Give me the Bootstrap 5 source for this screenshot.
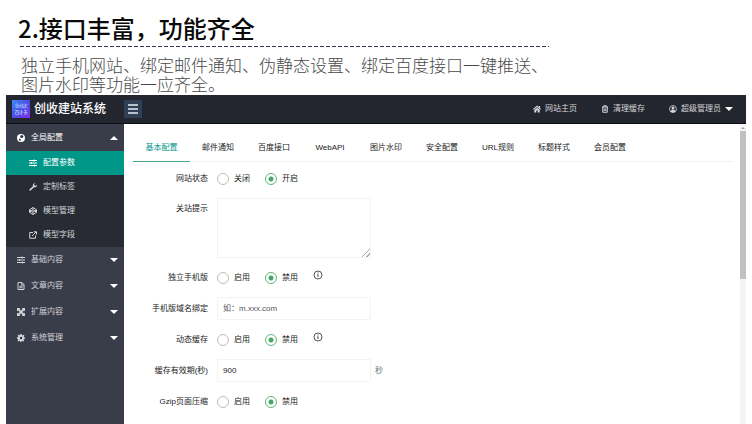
<!DOCTYPE html>
<html lang="zh-CN">
<head>
<meta charset="utf-8">
<meta name="viewport" content="width=device-width, initial-scale=1">
<title>创收建站系统</title>
<link href="https://cdn.jsdelivr.net/npm/bootstrap@5.3.0/dist/css/bootstrap.min.css" rel="stylesheet">
<style>
body{font-family:"Liberation Sans","Noto Sans CJK SC",sans-serif;font-size:8px;line-height:12px;color:#222;background:#fff}
.intro{padding:12px 20px 2px 18px}
.intro h1{font:500 24px/32px "Noto Sans CJK SC",sans-serif;color:#0a0a0a;margin:0}
.dashes{height:1px;margin:2px 0 8px 2px;width:calc(100% - 185px);background:repeating-linear-gradient(90deg,#34345c 0 4px,transparent 4px 6px)}
.intro p{font:300 17px/19px "Noto Sans CJK SC",sans-serif;color:#4a4a4a;margin:0 0 0 3px}
.panel{margin:0 6px}
.topbar{background:#23262e;height:29px;border-bottom:1px solid #0c0e16;padding:0 13px 0 6px}
.topbar a{color:#d4d5d8;text-decoration:none}
.brand{width:112px;font-size:12px;line-height:18px;font-weight:500}
.topbar .brand{color:#fff}
.toggle{width:18px;height:18px;background:#2f4056;border:0;padding:0}
.side{width:118px;background:#393d49;flex:none}
.side a{color:#d3d4d8;text-decoration:none;display:flex;align-items:center;height:26px;padding:0 6px 0 11px}
.side a span{flex:1;margin-left:6px}
.side .open-row{height:27px;color:#fff}
.submenu{background:#282b33}
.submenu a{height:24px;padding-left:23px}
.side .submenu a.current{background:#009688;color:#fff}
.ico{width:8px;height:8px;flex:none;fill:currentColor;display:block}
.line-ico{fill:none;stroke:currentColor;stroke-width:2}
.caret{width:0;height:0;border:4px solid transparent;border-top-color:#fff;border-bottom:0;flex:none}
.caret.up{border:4px solid transparent;border-bottom-color:#fff;border-top:0}
.main{padding:11px 6px 0 9px;min-width:0}
.tabs{border-bottom:1px solid #f2f2f2;height:27px;margin-bottom:5px}
.tabs button{width:56px;height:27px;border:0;border-bottom:1px solid transparent;background:none;padding:0;color:#222;white-space:nowrap}
.tabs button.current{width:57px;color:#009688;border-bottom-color:#45a587}
.line{display:flex;align-items:center;min-height:23px;margin-bottom:8px}
.line > .name{width:75px;text-align:right;margin-right:9px;flex:none;white-space:nowrap}
.line.top{align-items:flex-start}
.line.top > .name{padding-top:5px}
.field{width:154px;height:23px;border:1px solid #f3f3f3;border-radius:1px;background:#fff;padding:0 5px;color:#222;outline:0}
.field::placeholder{color:#555;opacity:1}
textarea.field{height:60px;display:block;resize:both}
textarea.field::-webkit-resizer{background:linear-gradient(135deg,transparent 0 70%,#aaa 70% 76%,transparent 76% 84%,#aaa 84% 90%,transparent 90%)}
.pick{display:flex;align-items:center;width:48px}
.pick input{appearance:none;width:12px;height:12px;border:1px solid #bdbdbd;border-radius:50%;margin:0 5px 0 0;flex:none}
.pick input:checked{border-color:#5fb878;background:radial-gradient(circle,#4aa56c 0 2px,#fff 3px)}
.info{width:10px;height:10px;margin-bottom:6px;color:#444}
.scroll{width:6px;background:#f5f5f5;padding-top:7px;flex:none;position:relative}
.scroll::before{content:"";position:absolute;left:1px;top:3px;border:2px solid transparent;border-bottom-color:#a0a0a0;border-top:0}
.scroll div{height:148px;background:#c1c1c1}
</style>
<script src="https://cdn.jsdelivr.net/npm/bootstrap@5.3.0/dist/js/bootstrap.bundle.min.js"></script>
</head>
<body>
<div class="d-flex flex-column min-vh-100">
<section class="intro">
  <h1>2.接口丰富，功能齐全</h1>
  <div class="dashes"></div>
  <p>独立手机网站、绑定邮件通知、伪静态设置、绑定百度接口一键推送、<br>图片水印等功能一应齐全。</p>
</section>
<div class="panel d-flex flex-column flex-grow-1">
  <header class="topbar d-flex align-items-center">
    <a href="#" class="brand d-flex align-items-center">
      <svg class="me-1 flex-shrink-0" width="18" height="18" viewBox="0 0 18 18"><defs><linearGradient id="lg" x1="0" y1="0" x2="1" y2="1"><stop offset="0" stop-color="#3d8bf5"/><stop offset=".5" stop-color="#4a4fe6"/><stop offset="1" stop-color="#8a2be8"/></linearGradient></defs><rect width="18" height="18" fill="url(#lg)"/><g fill="none" stroke="#a9c4ff" stroke-width=".7"><path d="M3 5.500 5 3.500 7 5.500M4 5.500h2.500v2H4v-2M8 4.500v3M9 3.500v5M10.500 4v3.500h1.500M12 3.500v5M13 5h2.500M14 3.500l-1 5M13 6l2.500 2.500M3 10.500h4M5 10v2M3.500 12h3v2.500h-3zM8 10.500v4M9.500 10v5M9.500 12h1.500M12 10.500h3M11.500 12.500h4M13.500 10v4l-1.500.5M13.500 13l2 1.500"/></g></svg>创收建站系统</a>
    <button class="toggle d-flex align-items-center justify-content-center" type="button" aria-label="菜单"><svg width="10" height="10" viewBox="0 0 10 10"><path d="M0 1h10M0 5h10M0 9h10" stroke="#e6ecf2" stroke-width="1.500"/></svg></button>
    <nav class="ms-auto d-flex align-items-center">
      <a href="#" class="d-flex align-items-center me-4"><svg class="ico me-1" viewBox="0 0 16 16"><path d="M8 1 0 8l1.500 1.500L8 4l6.500 5.500L16 8l-2-2V2h-2.500v2zM8 5.500 2.500 10v5H6.500v-4h3v4h4v-5z"/></svg>网站主页</a>
      <a href="#" class="d-flex align-items-center me-4"><svg class="ico line-ico me-1" viewBox="0 0 16 16"><path d="M2 4h12M5.500 4V1.500h5V4M3.500 4v10.500h9V4M6.500 7v5M9.500 7v5"/></svg>清理缓存</a>
      <a href="#" class="d-flex align-items-center"><svg class="ico me-1" viewBox="0 0 16 16"><circle cx="8" cy="8" r="7" fill="none" stroke="currentColor" stroke-width="1.600"/><circle cx="8" cy="6" r="3"/><path d="M3 13c0-5 10-5 10 0-3 2.500-7 2.500-10 0z"/></svg>超级管理员<i class="caret ms-1"></i></a>
    </nav>
  </header>
  <div class="d-flex flex-grow-1">
    <nav class="side">
      <a href="#" class="open-row"><svg class="ico" viewBox="0 0 16 16"><path fill-rule="evenodd" d="M8 0a8 8 0 1 0 0 16A8 8 0 0 0 8 0zM7 3l4-1 2 3-2 3-3 0-2-2zM4 9l3 1 1 3-2 1-2-2z"/></svg><span>全局配置</span><i class="caret up"></i></a>
      <div class="submenu">
        <a href="#" class="current"><svg class="ico line-ico" viewBox="0 0 16 16"><path d="M0 3h16M0 8h16M0 13h16M10 1v4M5 6v4M11 11v4"/></svg><span>配置参数</span></a>
        <a href="#"><svg class="ico" viewBox="0 0 16 16"><path d="M15.500 3.500 12.500 6 10 3.500 12.500.5C9 0 7 3 8 6L.8 13c-1 1.500 1 3.300 2.400 2.200L10 8.500c3.500 1 6.500-1.500 5.500-5z"/></svg><span>定制标签</span></a>
        <a href="#"><svg class="ico line-ico" viewBox="0 0 16 16"><path d="m8 1 7 4.500v5L8 15l-7-4.500v-5zM8 1v4.500M8 10.500V15M1 5.500l7 5 7-5M1 10.500l7-5 7 5"/></svg><span>模型管理</span></a>
        <a href="#"><svg class="ico line-ico" viewBox="0 0 16 16"><path d="M8 3H1.500v11.500H13V9M6 10l8-8M9.500 1.500H15V7"/></svg><span>模型字段</span></a>
      </div>
      <a href="#"><svg class="ico line-ico" viewBox="0 0 16 16"><path d="M0 3h16M0 8h16M0 13h16M10 1v4M5 6v4M11 11v4"/></svg><span>基础内容</span><i class="caret"></i></a>
      <a href="#"><svg class="ico line-ico" viewBox="0 0 16 16"><path d="M2 1h8l4 4v10H2zM9.500 1v5H14M5 8.500h6M5 11.500h6"/></svg><span>文章内容</span><i class="caret"></i></a>
      <a href="#"><svg class="ico" viewBox="0 0 16 16"><path d="M0 0h6.500L5 2l3 3.500L11 2 9.500 0H16v6.500L14 5l-3.500 3 3.500 3 2-1.500V16H9.500L11 14l-3-3.500L5 14l1.500 2H0V9.500L2 11l3.500-3L2 5 0 6.500z"/></svg><span>扩展内容</span><i class="caret"></i></a>
      <a href="#"><svg class="ico" viewBox="0 0 16 16"><path fill-rule="evenodd" d="M6.700 0h2.600l.5 2.200 1.400.6L13.200 1.500 15 3.400l-1.700 1.900.6 1.300 2.100.3v2.600l-2.200.5-.6 1.400 1.300 1.900-1.900 1.800-1.900-1.300-1.400.6-.5 1.600H6.700l-.5-1.800-1.400-.6-2 1.300L1 13l1.300-1.900-.6-1.400L0 9.300V6.700l2.200-.5.6-1.300L1.500 3 3.400 1l1.900 1.300 1-.5zM8 5.500a2.500 2.500 0 1 0 0 5 2.500 2.500 0 0 0 0-5z"/></svg><span>系统管理</span><i class="caret"></i></a>
    </nav>
    <main class="main flex-grow-1">
      <div class="tabs d-flex">
        <button type="button" class="current">基本配置</button><button type="button">邮件通知</button><button type="button">百度接口</button><button type="button">WebAPI</button><button type="button">图片水印</button><button type="button">安全配置</button><button type="button">URL规则</button><button type="button">标题样式</button><button type="button">会员配置</button>
      </div>
      <form>
        <div class="line"><span class="name">网站状态</span><label class="pick"><input type="radio" name="site">关闭</label><label class="pick"><input type="radio" name="site" checked>开启</label></div>
        <div class="line top"><label class="name" for="tip">关站提示</label><textarea class="field" id="tip"></textarea></div>
        <div class="line"><span class="name">独立手机版</span><label class="pick"><input type="radio" name="mob">启用</label><label class="pick"><input type="radio" name="mob" checked>禁用</label><svg class="info" viewBox="0 0 10 10"><circle cx="5" cy="5" r="4" fill="none" stroke="currentColor" stroke-width=".9"/><path d="M5 2.500v1M4.500 4.500H5v2.500" fill="none" stroke="currentColor"/></svg></div>
        <div class="line"><label class="name" for="dom">手机版域名绑定</label><input class="field" id="dom" type="text" placeholder="如：m.xxx.com"></div>
        <div class="line"><span class="name">动态缓存</span><label class="pick"><input type="radio" name="dyn">启用</label><label class="pick"><input type="radio" name="dyn" checked>禁用</label><svg class="info" viewBox="0 0 10 10"><circle cx="5" cy="5" r="4" fill="none" stroke="currentColor" stroke-width=".9"/><path d="M5 2.500v1M4.500 4.500H5v2.500" fill="none" stroke="currentColor"/></svg></div>
        <div class="line"><label class="name" for="ttl">缓存有效期(秒)</label><input class="field" id="ttl" type="text" value="900"><span class="ms-1 text-secondary">秒</span></div>
        <div class="line mb-0"><span class="name">Gzip页面压缩</span><label class="pick"><input type="radio" name="gz">启用</label><label class="pick"><input type="radio" name="gz" checked>禁用</label></div>
      </form>
    </main>
    <div class="scroll"><div></div></div>
  </div>
</div>
</div>
</body>
</html>
